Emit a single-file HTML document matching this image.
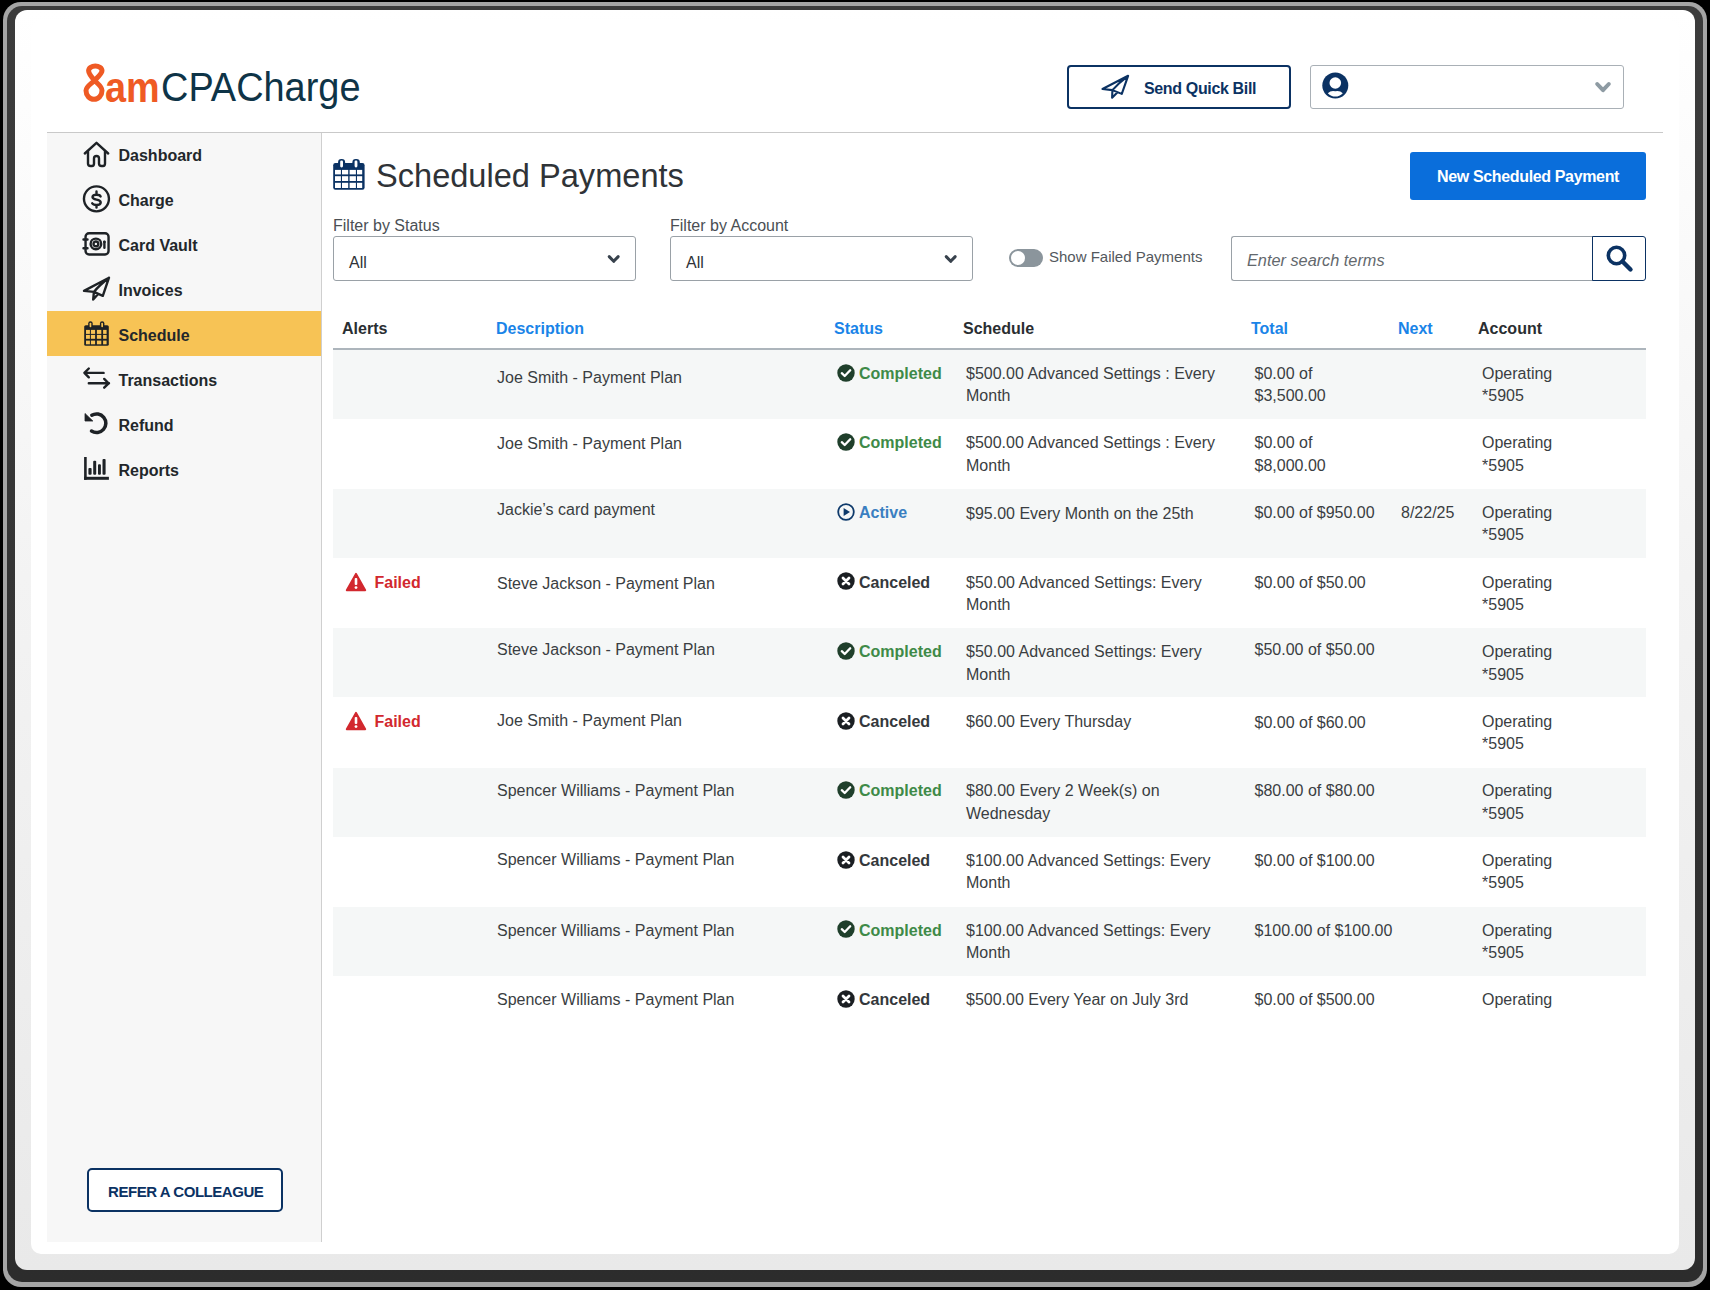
<!DOCTYPE html>
<html><head><meta charset="utf-8"><title>Scheduled Payments</title><style>
*{margin:0;padding:0;box-sizing:border-box}
html,body{width:1710px;height:1290px;overflow:hidden;background:#000;position:relative;font-family:"Liberation Sans",sans-serif}
.t{position:absolute;white-space:nowrap;line-height:1}
.box{position:absolute}
.ic{position:absolute;overflow:visible}
.shadow-o{position:absolute;left:3px;top:2px;width:1704px;height:1285px;border-radius:18px;background:#a5a5a5}
.shadow-i{position:absolute;left:7px;top:6px;width:1696px;height:1276px;border-radius:15px;background:linear-gradient(#3c3c3c,#2c2c2c)}
.frame{position:absolute;left:15px;top:10px;width:1680px;height:1260px;border-radius:12px;background:linear-gradient(#ffffff 0%,#f3f3f3 45%,#e9e9e9 100%)}
.panel{position:absolute;left:31px;top:20px;width:1648px;height:1234px;border-radius:10px;background:#fff}
.hline{position:absolute;left:47px;top:132px;width:1616px;height:1px;background:#c9c9c9}
.sidebar{position:absolute;left:47px;top:133px;width:275px;height:1109px;background:#f7f7f7;border-right:1px solid #cfcfcf}
.hl{position:absolute;left:47px;top:311px;width:274px;height:45px;background:#f7c355}
</style></head><body>
<div class="shadow-o"></div><div class="shadow-i"></div><div class="frame"></div><div class="panel"></div><div class="hline"></div><div class="sidebar"></div><svg class="ic" style="left:80px;top:60px" width="28" height="45" viewBox="0 0 28 45"><path d="M14.5 20.5 C18.5 16.5 22 13.5 22 10.8 C22 7.8 18.8 6.1 15.3 6.1 C11.8 6.1 8.6 7.8 8.6 10.8 C8.6 13.5 11 16.5 14.5 20.5 C18.5 24.5 22 26.5 22 30.5 C22 35.5 18.5 39.3 14 39.3 C9.5 39.3 6 35.5 6 30.5 C6 26.5 10.5 24.5 14.5 20.5 Z" fill="none" stroke="#ef5a24" stroke-width="5"/></svg><div class="t" style="left:104.5px;top:65.7px;font-size:43px;color:#ef5a24;font-weight:bold;transform:scaleX(0.88);transform-origin:0 0;">am</div>
<div class="t" style="left:161px;top:66.6px;font-size:41.3px;color:#0e3447;font-weight:normal;transform:scaleX(0.918);transform-origin:0 0;">CPACharge</div>
<div class="box" style="left:1067px;top:65px;width:224px;height:44px;border:2px solid #0b3263;border-radius:4px;"></div><svg class="ic" style="left:1100px;top:73px" width="30" height="27" viewBox="0 0 30 27"><path d="M2.5 16 L28.1 2.8 L21.8 20.9 L12.4 17.1 Z M28.1 2.8 Q18.5 10 12.4 17.1 L12.1 24.75 L17.3 19.5" fill="none" stroke="#0b3263" stroke-width="2.1" stroke-linejoin="round" stroke-linecap="round"/></svg><div class="t" style="left:1144px;top:80.6px;font-size:16px;color:#0b3263;font-weight:bold;letter-spacing:-0.35px;">Send Quick Bill</div>
<div class="box" style="left:1310px;top:65px;width:314px;height:44px;border:1px solid #a9b0b6;border-radius:3px;"></div><svg class="ic" style="left:1322px;top:72px" width="27" height="27" viewBox="0 0 27 27"><circle cx="13.3" cy="13.5" r="13" fill="#0b3263"/><circle cx="13.3" cy="11" r="5.8" fill="#fff"/><path d="M5.8 21.2 Q9 18.2 13.3 19.3 Q17.6 18.2 20.8 21.2 Q17.5 24.6 13.3 24.6 Q9.1 24.6 5.8 21.2 Z" fill="#fff"/></svg><svg class="ic" style="left:1594px;top:80px" width="18" height="12" viewBox="0 0 18 12"><path d="M3.2 4 L9 10.2 L14.8 4" fill="none" stroke="#8e9ba3" stroke-width="4" stroke-linecap="round" stroke-linejoin="round"/></svg><div class="hl"></div><div class="t" style="left:118.5px;top:148.2px;font-size:16px;color:#23272b;font-weight:bold;">Dashboard</div>
<div class="t" style="left:118.5px;top:193.1px;font-size:16px;color:#23272b;font-weight:bold;">Charge</div>
<div class="t" style="left:118.5px;top:238.0px;font-size:16px;color:#23272b;font-weight:bold;">Card Vault</div>
<div class="t" style="left:118.5px;top:282.9px;font-size:16px;color:#23272b;font-weight:bold;">Invoices</div>
<div class="t" style="left:118.5px;top:327.8px;font-size:16px;color:#23272b;font-weight:bold;">Schedule</div>
<div class="t" style="left:118.5px;top:372.7px;font-size:16px;color:#23272b;font-weight:bold;">Transactions</div>
<div class="t" style="left:118.5px;top:417.6px;font-size:16px;color:#23272b;font-weight:bold;">Refund</div>
<div class="t" style="left:118.5px;top:462.5px;font-size:16px;color:#23272b;font-weight:bold;">Reports</div>
<svg class="ic" style="left:83px;top:141px" width="27" height="27" viewBox="0 0 27 27"><path d="M1.8 12.5 L13.5 1.8 L25.2 12.5" fill="none" stroke="#1e2226" stroke-width="2.4" stroke-linecap="round" stroke-linejoin="round"/><path d="M5 10.5 V22.5 Q5 25 7.5 25 H9 Q11 25 11 22.5 V17.5 Q11 15 13.5 15 Q16 15 16 17.5 V22.5 Q16 25 18.5 25 H20 Q22 25 22 22.5 V10.5" fill="none" stroke="#1e2226" stroke-width="2.4" stroke-linecap="round" stroke-linejoin="round"/></svg><svg class="ic" style="left:82px;top:185px" width="29" height="29" viewBox="0 0 29 29"><circle cx="14.45" cy="13.85" r="12.5" fill="none" stroke="#1e2226" stroke-width="2.4" stroke-linecap="round" stroke-linejoin="round" stroke-width="2"/><path d="M18.6 11.4 Q17.8 9.7 14.5 9.7 Q10.5 9.7 10.5 12 Q10.5 13.8 14.5 14.6 Q18.7 15.4 18.7 17.4 Q18.7 19.9 14.5 19.9 Q11.1 19.9 10.2 18.2 M14.5 6.4 V9.7 M14.5 19.9 V22.6" fill="none" stroke="#1e2226" stroke-width="2.4" stroke-linecap="round" stroke-linejoin="round" stroke-width="2.4" stroke-linecap="butt"/></svg><svg class="ic" style="left:82px;top:231px" width="29" height="27" viewBox="0 0 29 27"><rect x="3.55" y="2.25" width="23" height="21.3" rx="3.5" fill="none" stroke="#1e2226" stroke-width="2.4" stroke-linecap="round" stroke-linejoin="round" stroke-width="2.5"/><path d="M1.5 8.5 H5.5 M1.5 17.3 H5.5" fill="none" stroke="#1e2226" stroke-width="2.4" stroke-linecap="round" stroke-linejoin="round" stroke-width="2.6"/><circle cx="13.9" cy="12.9" r="5.3" fill="none" stroke="#1e2226" stroke-width="2.4" stroke-linecap="round" stroke-linejoin="round" stroke-width="1.3"/><circle cx="13.9" cy="12.9" r="2.4" fill="none" stroke="#1e2226" stroke-width="2.4" stroke-linecap="round" stroke-linejoin="round" stroke-width="1.5"/><circle cx="22.4" cy="10.9" r="1.4" fill="#1e2226"/><path d="M22.4 11 V16.8" fill="none" stroke="#1e2226" stroke-width="2.4" stroke-linecap="round" stroke-linejoin="round" stroke-width="1.1"/></svg><svg class="ic" style="left:82px;top:275px" width="30" height="28" viewBox="0 0 30 28"><path d="M2 15.9 L27 2.7 L20.8 20.8 L11.9 16.9 Z M27 2.7 Q17.5 10 11.9 16.9 L11.2 24.5 L15.9 19.3" fill="none" stroke="#1e2226" stroke-width="2.4" stroke-linecap="round" stroke-linejoin="round" stroke-width="2.3"/></svg><svg class="ic" style="left:83px;top:320px" width="27" height="27" viewBox="0 0 27 27"><rect x="1.2" y="5.2" width="24.6" height="20.6" rx="1.6" fill="#1e2226"/><g fill="#f7c355"><rect x="3" y="9.9" width="3.9" height="4.0"/><rect x="7.9" y="9.9" width="4.2" height="4.0"/><rect x="13.9" y="9.9" width="4.4" height="4.0"/><rect x="20.1" y="9.9" width="3.5" height="4.0"/><rect x="3" y="14.9" width="3.9" height="3.9"/><rect x="7.9" y="14.9" width="4.2" height="3.9"/><rect x="13.9" y="14.9" width="4.4" height="3.9"/><rect x="20.1" y="14.9" width="3.5" height="3.9"/><rect x="3" y="20.6" width="3.9" height="3.7"/><rect x="7.9" y="20.6" width="4.2" height="3.7"/><rect x="13.9" y="20.6" width="4.4" height="3.7"/><rect x="20.1" y="20.6" width="3.5" height="3.7"/></g><rect x="5.2" y="1.2" width="4.5" height="7.2" rx="2.2" fill="#1e2226"/><rect x="16.9" y="1.2" width="4.5" height="7.2" rx="2.2" fill="#1e2226"/><rect x="6.6" y="2.7" width="1.7" height="4.6" rx="0.8" fill="#f7c355"/><rect x="18.3" y="2.7" width="1.7" height="4.6" rx="0.8" fill="#f7c355"/></svg><svg class="ic" style="left:82px;top:363px" width="29" height="27" viewBox="0 0 29 27"><path d="M2.6 9.9 H21.6 M6.8 5.5 L2.4 9.9 L6.8 14.3 M6.8 20.3 H27 M22.2 15.9 L26.6 20.3 L22.2 24.7" fill="none" stroke="#1e2226" stroke-width="2.4" stroke-linecap="round" stroke-linejoin="round" stroke-width="2.6"/></svg><svg class="ic" style="left:83px;top:410px" width="26" height="26" viewBox="0 0 26 26"><path d="M8.8 5.2 A9.3 9.3 0 1 1 8.5 21" fill="none" stroke="#1e2226" stroke-width="3.5" stroke-linecap="round"/><path d="M2 3.5 V11 H9.8 Z" fill="#1e2226" stroke="#1e2226" stroke-width="0.8" stroke-linejoin="round"/></svg><svg class="ic" style="left:83px;top:455px" width="27" height="26" viewBox="0 0 27 26"><g fill="#1e2226"><rect x="1.1" y="2" width="2.6" height="22.8"/><rect x="1.1" y="21.8" width="24.8" height="3"/><rect x="5.4" y="13.1" width="3.2" height="6.6" rx="1"/><rect x="10.2" y="5.7" width="3" height="14" rx="1"/><rect x="15" y="9.2" width="2.9" height="10.5" rx="1"/><rect x="19.5" y="4" width="3.1" height="15.7" rx="1"/></g></svg><div class="box" style="left:87px;top:1168px;width:196px;height:44px;border:2px solid #0b3263;border-radius:5px;background:#fff"></div><div class="t" style="left:108px;top:1184px;font-size:15px;color:#0b3263;font-weight:bold;letter-spacing:-0.45px;">REFER A COLLEAGUE</div>
<svg class="ic" style="left:333px;top:158px" width="33" height="33" viewBox="0 0 33 33"><rect x="0.2" y="5.1" width="31.4" height="26.7" rx="2.2" fill="#0b3263"/><g fill="#fff"><rect x="2" y="11.9" width="5.9" height="4.5"/><rect x="9" y="11.9" width="6.2" height="4.5"/><rect x="16.6" y="11.9" width="6.3" height="4.5"/><rect x="24" y="11.9" width="5.2" height="4.5"/><rect x="2" y="18.2" width="5.9" height="4.8"/><rect x="9" y="18.2" width="6.2" height="4.8"/><rect x="16.6" y="18.2" width="6.3" height="4.8"/><rect x="24" y="18.2" width="5.2" height="4.8"/><rect x="2" y="24.8" width="5.9" height="5.2"/><rect x="9" y="24.8" width="6.2" height="5.2"/><rect x="16.6" y="24.8" width="6.3" height="5.2"/><rect x="24" y="24.8" width="5.2" height="5.2"/></g><rect x="5.1" y="0.9" width="7" height="8.8" rx="3.3" fill="#0b3263"/><rect x="19.4" y="0.9" width="7.4" height="8.8" rx="3.3" fill="#0b3263"/><rect x="7.2" y="2.5" width="2.8" height="6.9" rx="1.3" fill="#fff"/><rect x="21.6" y="2.5" width="2.8" height="6.9" rx="1.3" fill="#fff"/></svg><div class="t" style="left:376px;top:160px;font-size:32.6px;color:#2f3337;font-weight:normal;">Scheduled Payments</div>
<div class="box" style="left:1410px;top:152px;width:236px;height:48px;background:#0a6edb;border-radius:3px;"></div><div class="t" style="left:1437px;top:169.2px;font-size:16px;color:#fff;font-weight:bold;letter-spacing:-0.35px;">New Scheduled Payment</div>
<div class="t" style="left:333px;top:217.7px;font-size:16px;color:#4a4f54;font-weight:normal;">Filter by Status</div>
<div class="t" style="left:670px;top:217.7px;font-size:16px;color:#4a4f54;font-weight:normal;">Filter by Account</div>
<div class="box" style="left:333px;top:236px;width:303px;height:45px;border:1px solid #9aa1a7;border-radius:3px;background:#fff"></div><div class="t" style="left:349px;top:254.8px;font-size:16px;color:#2f3337;font-weight:normal;">All</div>
<svg class="ic" style="left:605px;top:253px" width="16" height="13" viewBox="0 0 16 13"><path d="M4.2 3.6 L8.7 8.3 L13.2 3.6" fill="none" stroke="#38424d" stroke-width="3" stroke-linecap="round" stroke-linejoin="round"/></svg><div class="box" style="left:670px;top:236px;width:303px;height:45px;border:1px solid #9aa1a7;border-radius:3px;background:#fff"></div><div class="t" style="left:686px;top:254.8px;font-size:16px;color:#2f3337;font-weight:normal;">All</div>
<svg class="ic" style="left:942px;top:253px" width="16" height="13" viewBox="0 0 16 13"><path d="M4.2 3.6 L8.7 8.3 L13.2 3.6" fill="none" stroke="#38424d" stroke-width="3" stroke-linecap="round" stroke-linejoin="round"/></svg><div class="box" style="left:1008.5px;top:248.5px;width:34px;height:18.5px;border-radius:9.5px;background:#8b959c"></div><div class="box" style="left:1010.5px;top:250.5px;width:14.5px;height:14.5px;border-radius:50%;background:#fff"></div><div class="t" style="left:1049px;top:249px;font-size:15px;color:#53585d;font-weight:normal;">Show Failed Payments</div>
<div class="box" style="left:1231px;top:236px;width:362px;height:45px;border:1px solid #9aa1a7;border-right:none;border-radius:3px 0 0 3px;background:#fff"></div><div class="box" style="left:1592px;top:236px;width:54px;height:45px;border:1px solid #0b3263;border-radius:0 3px 3px 0;background:#fff"></div><svg class="ic" style="left:1604px;top:243px" width="32" height="32" viewBox="0 0 32 32"><circle cx="12.5" cy="12.5" r="8.2" fill="none" stroke="#0b3263" stroke-width="3.6"/><path d="M18.5 18.5 L26.5 26.5" stroke="#0b3263" stroke-width="4.4" stroke-linecap="round"/></svg><div class="t" style="left:1247px;top:251.60000000000002px;font-size:16.3px;color:#63686d;font-weight:normal;font-style:italic;">Enter search terms</div>
<div class="t" style="left:342px;top:321px;font-size:16px;color:#2a2e32;font-weight:bold;">Alerts</div>
<div class="t" style="left:496px;top:321px;font-size:16px;color:#1a84e8;font-weight:bold;">Description</div>
<div class="t" style="left:834px;top:321px;font-size:16px;color:#1a84e8;font-weight:bold;">Status</div>
<div class="t" style="left:963px;top:321px;font-size:16px;color:#2a2e32;font-weight:bold;">Schedule</div>
<div class="t" style="left:1251px;top:321px;font-size:16px;color:#1a84e8;font-weight:bold;">Total</div>
<div class="t" style="left:1398px;top:321px;font-size:16px;color:#1a84e8;font-weight:bold;">Next</div>
<div class="t" style="left:1478px;top:321px;font-size:16px;color:#2a2e32;font-weight:bold;">Account</div>
<div class="box" style="left:333px;top:348px;width:1313px;height:2px;background:#adb5bc"></div><div class="box" style="left:333px;top:350.0px;width:1313px;height:69.0px;background:#f5f7f7"></div><div class="box" style="left:333px;top:489.2px;width:1313px;height:69.0px;background:#f5f7f7"></div><div class="box" style="left:333px;top:628.4px;width:1313px;height:69.0px;background:#f5f7f7"></div><div class="box" style="left:333px;top:767.6px;width:1313px;height:69.0px;background:#f5f7f7"></div><div class="box" style="left:333px;top:906.8px;width:1313px;height:69.0px;background:#f5f7f7"></div><div class="t" style="left:497px;top:369.8px;font-size:16px;color:#3a3e42;font-weight:normal;">Joe Smith - Payment Plan</div>
<svg class="ic" style="left:837px;top:363.5px" width="18" height="18" viewBox="0 0 18 18"><circle cx="9" cy="9" r="8.7" fill="#1f3f2b"/><path d="M4.8 9.2 L7.7 12 L13.2 6.3" fill="none" stroke="#fff" stroke-width="2.3" stroke-linecap="round" stroke-linejoin="round"/></svg><div class="t" style="left:859px;top:365.8px;font-size:16px;color:#3e8a48;font-weight:bold;">Completed</div>
<div class="t" style="left:966px;top:365.8px;font-size:16px;color:#3a3e42;font-weight:normal;">$500.00 Advanced Settings : Every</div>
<div class="t" style="left:966px;top:388.1px;font-size:16px;color:#3a3e42;font-weight:normal;">Month</div>
<div class="t" style="left:1254.5px;top:365.8px;font-size:16px;color:#3a3e42;font-weight:normal;">$0.00 of</div>
<div class="t" style="left:1254.5px;top:388.1px;font-size:16px;color:#3a3e42;font-weight:normal;">$3,500.00</div>
<div class="t" style="left:1482px;top:365.8px;font-size:16px;color:#3a3e42;font-weight:normal;">Operating</div>
<div class="t" style="left:1482px;top:388.1px;font-size:16px;color:#3a3e42;font-weight:normal;">*5905</div>
<div class="t" style="left:497px;top:436.4px;font-size:16px;color:#3a3e42;font-weight:normal;">Joe Smith - Payment Plan</div>
<svg class="ic" style="left:837px;top:433.1px" width="18" height="18" viewBox="0 0 18 18"><circle cx="9" cy="9" r="8.7" fill="#1f3f2b"/><path d="M4.8 9.2 L7.7 12 L13.2 6.3" fill="none" stroke="#fff" stroke-width="2.3" stroke-linecap="round" stroke-linejoin="round"/></svg><div class="t" style="left:859px;top:435.4px;font-size:16px;color:#3e8a48;font-weight:bold;">Completed</div>
<div class="t" style="left:966px;top:435.4px;font-size:16px;color:#3a3e42;font-weight:normal;">$500.00 Advanced Settings : Every</div>
<div class="t" style="left:966px;top:457.7px;font-size:16px;color:#3a3e42;font-weight:normal;">Month</div>
<div class="t" style="left:1254.5px;top:435.4px;font-size:16px;color:#3a3e42;font-weight:normal;">$0.00 of</div>
<div class="t" style="left:1254.5px;top:457.7px;font-size:16px;color:#3a3e42;font-weight:normal;">$8,000.00</div>
<div class="t" style="left:1482px;top:435.4px;font-size:16px;color:#3a3e42;font-weight:normal;">Operating</div>
<div class="t" style="left:1482px;top:457.7px;font-size:16px;color:#3a3e42;font-weight:normal;">*5905</div>
<div class="t" style="left:497px;top:502.0px;font-size:16px;color:#3a3e42;font-weight:normal;">Jackie’s card payment</div>
<svg class="ic" style="left:837px;top:502.7px" width="18" height="18" viewBox="0 0 18 18"><circle cx="9" cy="9" r="7.8" fill="none" stroke="#0e3a6b" stroke-width="1.8"/><path d="M6.6 5 L13 9 L6.6 13 Z" fill="#0e3a6b"/></svg><div class="t" style="left:859px;top:505.0px;font-size:16px;color:#3a7fc1;font-weight:bold;">Active</div>
<div class="t" style="left:966px;top:506.0px;font-size:16px;color:#3a3e42;font-weight:normal;">$95.00 Every Month on the 25th</div>
<div class="t" style="left:1254.5px;top:505.0px;font-size:16px;color:#3a3e42;font-weight:normal;">$0.00 of $950.00</div>
<div class="t" style="left:1401px;top:505.0px;font-size:16px;color:#3a3e42;font-weight:normal;">8/22/25</div>
<div class="t" style="left:1482px;top:505.0px;font-size:16px;color:#3a3e42;font-weight:normal;">Operating</div>
<div class="t" style="left:1482px;top:527.3px;font-size:16px;color:#3a3e42;font-weight:normal;">*5905</div>
<svg class="ic" style="left:345px;top:572.1px" width="22" height="20" viewBox="0 0 22 20"><path d="M11 1.8 L20.3 18.3 H1.7 Z" fill="#d2282e" stroke="#d2282e" stroke-width="1.8" stroke-linejoin="round"/><rect x="9.7" y="6" width="2.6" height="7" rx="1" fill="#fff"/><circle cx="11" cy="15.6" r="1.4" fill="#fff"/></svg><div class="t" style="left:374.5px;top:574.6px;font-size:16px;color:#d2282e;font-weight:bold;">Failed</div>
<div class="t" style="left:497px;top:575.6px;font-size:16px;color:#3a3e42;font-weight:normal;">Steve Jackson - Payment Plan</div>
<svg class="ic" style="left:837px;top:572.3px" width="18" height="18" viewBox="0 0 18 18"><circle cx="9" cy="9" r="8.7" fill="#1b1f23"/><path d="M6 6 L12 12 M12 6 L6 12" stroke="#fff" stroke-width="2.8" stroke-linecap="round"/></svg><div class="t" style="left:859px;top:574.6px;font-size:16px;color:#34383c;font-weight:bold;">Canceled</div>
<div class="t" style="left:966px;top:574.6px;font-size:16px;color:#3a3e42;font-weight:normal;">$50.00 Advanced Settings: Every</div>
<div class="t" style="left:966px;top:596.9px;font-size:16px;color:#3a3e42;font-weight:normal;">Month</div>
<div class="t" style="left:1254.5px;top:574.6px;font-size:16px;color:#3a3e42;font-weight:normal;">$0.00 of $50.00</div>
<div class="t" style="left:1482px;top:574.6px;font-size:16px;color:#3a3e42;font-weight:normal;">Operating</div>
<div class="t" style="left:1482px;top:596.9px;font-size:16px;color:#3a3e42;font-weight:normal;">*5905</div>
<div class="t" style="left:497px;top:642.2px;font-size:16px;color:#3a3e42;font-weight:normal;">Steve Jackson - Payment Plan</div>
<svg class="ic" style="left:837px;top:641.9px" width="18" height="18" viewBox="0 0 18 18"><circle cx="9" cy="9" r="8.7" fill="#1f3f2b"/><path d="M4.8 9.2 L7.7 12 L13.2 6.3" fill="none" stroke="#fff" stroke-width="2.3" stroke-linecap="round" stroke-linejoin="round"/></svg><div class="t" style="left:859px;top:644.2px;font-size:16px;color:#3e8a48;font-weight:bold;">Completed</div>
<div class="t" style="left:966px;top:644.2px;font-size:16px;color:#3a3e42;font-weight:normal;">$50.00 Advanced Settings: Every</div>
<div class="t" style="left:966px;top:666.5px;font-size:16px;color:#3a3e42;font-weight:normal;">Month</div>
<div class="t" style="left:1254.5px;top:642.2px;font-size:16px;color:#3a3e42;font-weight:normal;">$50.00 of $50.00</div>
<div class="t" style="left:1482px;top:644.2px;font-size:16px;color:#3a3e42;font-weight:normal;">Operating</div>
<div class="t" style="left:1482px;top:666.5px;font-size:16px;color:#3a3e42;font-weight:normal;">*5905</div>
<svg class="ic" style="left:345px;top:711.3px" width="22" height="20" viewBox="0 0 22 20"><path d="M11 1.8 L20.3 18.3 H1.7 Z" fill="#d2282e" stroke="#d2282e" stroke-width="1.8" stroke-linejoin="round"/><rect x="9.7" y="6" width="2.6" height="7" rx="1" fill="#fff"/><circle cx="11" cy="15.6" r="1.4" fill="#fff"/></svg><div class="t" style="left:374.5px;top:713.8px;font-size:16px;color:#d2282e;font-weight:bold;">Failed</div>
<div class="t" style="left:497px;top:712.8px;font-size:16px;color:#3a3e42;font-weight:normal;">Joe Smith - Payment Plan</div>
<svg class="ic" style="left:837px;top:711.5px" width="18" height="18" viewBox="0 0 18 18"><circle cx="9" cy="9" r="8.7" fill="#1b1f23"/><path d="M6 6 L12 12 M12 6 L6 12" stroke="#fff" stroke-width="2.8" stroke-linecap="round"/></svg><div class="t" style="left:859px;top:713.8px;font-size:16px;color:#34383c;font-weight:bold;">Canceled</div>
<div class="t" style="left:966px;top:713.8px;font-size:16px;color:#3a3e42;font-weight:normal;">$60.00 Every Thursday</div>
<div class="t" style="left:1254.5px;top:714.8px;font-size:16px;color:#3a3e42;font-weight:normal;">$0.00 of $60.00</div>
<div class="t" style="left:1482px;top:713.8px;font-size:16px;color:#3a3e42;font-weight:normal;">Operating</div>
<div class="t" style="left:1482px;top:736.1px;font-size:16px;color:#3a3e42;font-weight:normal;">*5905</div>
<div class="t" style="left:497px;top:783.4px;font-size:16px;color:#3a3e42;font-weight:normal;">Spencer Williams - Payment Plan</div>
<svg class="ic" style="left:837px;top:781.1px" width="18" height="18" viewBox="0 0 18 18"><circle cx="9" cy="9" r="8.7" fill="#1f3f2b"/><path d="M4.8 9.2 L7.7 12 L13.2 6.3" fill="none" stroke="#fff" stroke-width="2.3" stroke-linecap="round" stroke-linejoin="round"/></svg><div class="t" style="left:859px;top:783.4px;font-size:16px;color:#3e8a48;font-weight:bold;">Completed</div>
<div class="t" style="left:966px;top:783.4px;font-size:16px;color:#3a3e42;font-weight:normal;">$80.00 Every 2 Week(s) on</div>
<div class="t" style="left:966px;top:805.7px;font-size:16px;color:#3a3e42;font-weight:normal;">Wednesday</div>
<div class="t" style="left:1254.5px;top:783.4px;font-size:16px;color:#3a3e42;font-weight:normal;">$80.00 of $80.00</div>
<div class="t" style="left:1482px;top:783.4px;font-size:16px;color:#3a3e42;font-weight:normal;">Operating</div>
<div class="t" style="left:1482px;top:805.7px;font-size:16px;color:#3a3e42;font-weight:normal;">*5905</div>
<div class="t" style="left:497px;top:852.0px;font-size:16px;color:#3a3e42;font-weight:normal;">Spencer Williams - Payment Plan</div>
<svg class="ic" style="left:837px;top:850.7px" width="18" height="18" viewBox="0 0 18 18"><circle cx="9" cy="9" r="8.7" fill="#1b1f23"/><path d="M6 6 L12 12 M12 6 L6 12" stroke="#fff" stroke-width="2.8" stroke-linecap="round"/></svg><div class="t" style="left:859px;top:853.0px;font-size:16px;color:#34383c;font-weight:bold;">Canceled</div>
<div class="t" style="left:966px;top:853.0px;font-size:16px;color:#3a3e42;font-weight:normal;">$100.00 Advanced Settings: Every</div>
<div class="t" style="left:966px;top:875.3px;font-size:16px;color:#3a3e42;font-weight:normal;">Month</div>
<div class="t" style="left:1254.5px;top:853.0px;font-size:16px;color:#3a3e42;font-weight:normal;">$0.00 of $100.00</div>
<div class="t" style="left:1482px;top:853.0px;font-size:16px;color:#3a3e42;font-weight:normal;">Operating</div>
<div class="t" style="left:1482px;top:875.3px;font-size:16px;color:#3a3e42;font-weight:normal;">*5905</div>
<div class="t" style="left:497px;top:922.6px;font-size:16px;color:#3a3e42;font-weight:normal;">Spencer Williams - Payment Plan</div>
<svg class="ic" style="left:837px;top:920.3px" width="18" height="18" viewBox="0 0 18 18"><circle cx="9" cy="9" r="8.7" fill="#1f3f2b"/><path d="M4.8 9.2 L7.7 12 L13.2 6.3" fill="none" stroke="#fff" stroke-width="2.3" stroke-linecap="round" stroke-linejoin="round"/></svg><div class="t" style="left:859px;top:922.6px;font-size:16px;color:#3e8a48;font-weight:bold;">Completed</div>
<div class="t" style="left:966px;top:922.6px;font-size:16px;color:#3a3e42;font-weight:normal;">$100.00 Advanced Settings: Every</div>
<div class="t" style="left:966px;top:944.9px;font-size:16px;color:#3a3e42;font-weight:normal;">Month</div>
<div class="t" style="left:1254.5px;top:922.6px;font-size:16px;color:#3a3e42;font-weight:normal;">$100.00 of $100.00</div>
<div class="t" style="left:1482px;top:922.6px;font-size:16px;color:#3a3e42;font-weight:normal;">Operating</div>
<div class="t" style="left:1482px;top:944.9px;font-size:16px;color:#3a3e42;font-weight:normal;">*5905</div>
<div class="t" style="left:497px;top:992.2px;font-size:16px;color:#3a3e42;font-weight:normal;">Spencer Williams - Payment Plan</div>
<svg class="ic" style="left:837px;top:989.9px" width="18" height="18" viewBox="0 0 18 18"><circle cx="9" cy="9" r="8.7" fill="#1b1f23"/><path d="M6 6 L12 12 M12 6 L6 12" stroke="#fff" stroke-width="2.8" stroke-linecap="round"/></svg><div class="t" style="left:859px;top:992.2px;font-size:16px;color:#34383c;font-weight:bold;">Canceled</div>
<div class="t" style="left:966px;top:992.2px;font-size:16px;color:#3a3e42;font-weight:normal;">$500.00 Every Year on July 3rd</div>
<div class="t" style="left:1254.5px;top:992.2px;font-size:16px;color:#3a3e42;font-weight:normal;">$0.00 of $500.00</div>
<div class="t" style="left:1482px;top:992.2px;font-size:16px;color:#3a3e42;font-weight:normal;">Operating</div>
</body></html>
